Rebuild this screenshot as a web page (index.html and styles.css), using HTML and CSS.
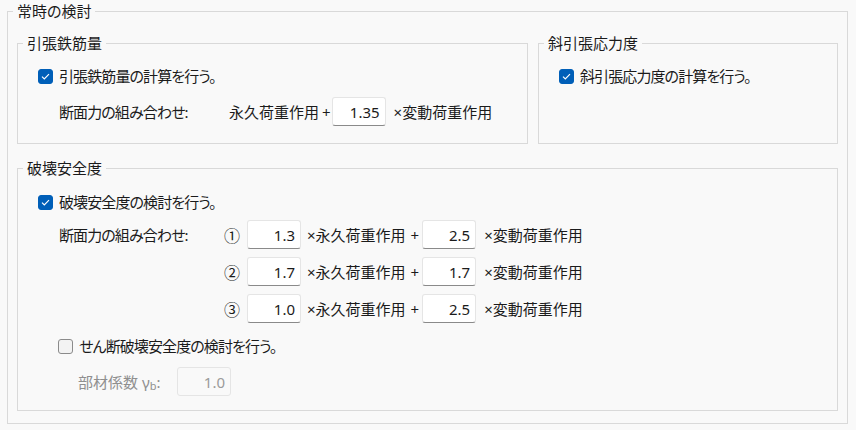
FILE: index.html
```html
<!DOCTYPE html>
<html lang="ja">
<head>
    <meta charset="UTF-8">
    <title>常時の検討</title>
    <link rel="stylesheet" href="styles.css">
</head>
<body>

    <!-- 常時の検討 -->
    <fieldset class="group outer">
        <legend>常時の検討</legend>

        <div class="top-row">
            <!-- 引張鉄筋量 -->
            <fieldset class="group">
                <legend>引張鉄筋量</legend>
                <div class="check-row">
                    <span class="box checked">
                        <svg width="15" height="15" viewBox="0 0 15 15"><path d="M4 7.6 L6.3 9.9 L11 5.2" fill="none" stroke="#fff" stroke-width="1.2"/></svg>
                    </span>
                    <span class="tight">引張鉄筋量の計算を行う。</span>
                </div>
                <div class="combo-row">
                    <span class="label wide tight">断面力の組み合わせ:</span>
                    <span class="term">永久荷重作用</span>
                    <span class="plus">+</span>
                    <span class="num">1.35</span>
                    <span class="term after">×変動荷重作用</span>
                </div>
            </fieldset>

            <!-- 斜引張応力度 -->
            <fieldset class="group">
                <legend>斜引張応力度</legend>
                <div class="check-row">
                    <span class="box checked">
                        <svg width="15" height="15" viewBox="0 0 15 15"><path d="M4 7.6 L6.3 9.9 L11 5.2" fill="none" stroke="#fff" stroke-width="1.2"/></svg>
                    </span>
                    <span class="tight">斜引張応力度の計算を行う。</span>
                </div>
            </fieldset>
        </div>

        <!-- 破壊安全度 -->
        <fieldset class="group lower">
            <legend>破壊安全度</legend>
            <div class="check-row">
                <span class="box checked">
                    <svg width="15" height="15" viewBox="0 0 15 15"><path d="M4 7.6 L6.3 9.9 L11 5.2" fill="none" stroke="#fff" stroke-width="1.2"/></svg>
                </span>
                <span class="tight">破壊安全度の検討を行う。</span>
            </div>

            <div class="rows">
                <div class="combo-row">
                    <span class="label tight">断面力の組み合わせ:</span>
                    <span class="circ">①</span>
                    <span class="num">1.3</span>
                    <span class="term mid">×永久荷重作用</span>
                    <span class="plus">+</span>
                    <span class="num">2.5</span>
                    <span class="term after">×変動荷重作用</span>
                </div>
                <div class="combo-row">
                    <span class="label"></span>
                    <span class="circ">②</span>
                    <span class="num">1.7</span>
                    <span class="term mid">×永久荷重作用</span>
                    <span class="plus">+</span>
                    <span class="num">1.7</span>
                    <span class="term after">×変動荷重作用</span>
                </div>
                <div class="combo-row">
                    <span class="label"></span>
                    <span class="circ">③</span>
                    <span class="num">1.0</span>
                    <span class="term mid">×永久荷重作用</span>
                    <span class="plus">+</span>
                    <span class="num">2.5</span>
                    <span class="term after">×変動荷重作用</span>
                </div>
            </div>

            <div class="check-row shear">
                <span class="box"></span>
                <span class="tight">せん断破壊安全度の検討を行う。</span>
            </div>
            <div class="gamma-row">
                <span class="muted">部材係数 γ<sub>b</sub>:</span>
                <span class="num disabled">1.0</span>
            </div>
        </fieldset>
    </fieldset>

</body>
</html>
```

FILE: styles.css
```css
/* Page */
body {
    margin: 0;
    background-color: #f9f9f9;
    color: #1b1b1b;
    font-family: "Noto Sans", "Noto Sans CJK JP", sans-serif;
    font-feature-settings: "palt" 1;
    font-size: 15px;
    line-height: 20px;
}

/* Kana-heavy labels run narrower in the original UI font */
.tight {
    letter-spacing: -0.9px;
}

/* Group boxes */
.group {
    margin: 0;
    padding: 13px 18px 17px 20px;
    border: 1px solid #d9d9d9;
    min-width: 0;
}

.group legend {
    margin-left: -15px;
    padding: 0 4px;
    line-height: 20px;
}

.outer {
    margin: 1px 8px 0 7px;
    padding: 12px 9px 12px 9px;
}

.outer > legend {
    margin-left: -4px;
}

.top-row {
    display: grid;
    grid-template-columns: 511px 300px;
    gap: 10px;
}

.lower {
    margin-top: 14px;
    padding-top: 14px;
    padding-bottom: 14px;
}

/* Check boxes */
.check-row {
    display: flex;
    align-items: center;
    height: 20px;
}

.box {
    width: 13px;
    height: 13px;
    margin-right: 6px;
    border: 1px solid #8b8b8b;
    border-radius: 3px;
    background-color: #f3f3f3;
    flex: none;
    position: relative;
}

.box.checked {
    border-color: #005fb8;
    background-color: #005fb8;
}

.box svg {
    position: absolute;
    left: -1px;
    top: -1px;
}

/* Combination rows */
.combo-row {
    display: flex;
    align-items: center;
    height: 29px;
    margin-top: 11px;
    padding-left: 21px;
}

.rows {
    display: flex;
    flex-direction: column;
    gap: 8px;
    margin-top: 8px;
}

.rows .combo-row {
    margin-top: 0;
}

.label {
    width: 165px;
    flex: none;
}

.label.wide {
    width: 170px;
}

.circ {
    width: 15px;
    margin-right: 8px;
    font-family: "Noto Sans CJK JP", sans-serif;
    font-size: 16px;
    font-feature-settings: normal;
}

.plus {
    margin: 0 1px 0 3px;
}

.term.mid {
    margin-left: 6px;
}

.term.mid + .plus {
    margin: 0 3px 0 5px;
}

.term.after {
    margin-left: 8px;
}

.num {
    box-sizing: border-box;
    width: 54px;
    height: 29px;
    padding: 4px 5px 0 0;
    text-align: right;
    background-color: #fff;
    border: 1px solid #e5e5e5;
    border-bottom-color: #8a8a8a;
    border-radius: 3px;
    flex: none;
}

.num.disabled {
    background-color: #f9f9f9;
    border-bottom-color: #e5e5e5;
    color: #9b9b9b;
}

/* Shear check */
.shear {
    margin-top: 13px;
    padding-left: 20px;
}

.gamma-row {
    display: flex;
    align-items: center;
    margin-top: 11px;
    padding-left: 40px;
}

.muted {
    color: #8f8f8f;
    width: 99px;
}

.muted sub {
    font-size: 11px;
    vertical-align: -2px;
    line-height: 0;
}
```
